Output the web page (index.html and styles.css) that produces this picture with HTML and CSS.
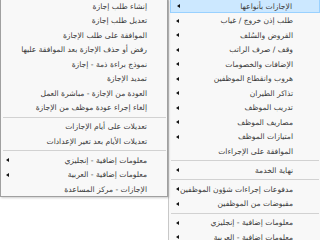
FILE: index.html
```html
<!DOCTYPE html>
<html lang="ar">
<head>
    <meta charset="UTF-8">
    <title>قائمة الإجازات</title>
    <link rel="stylesheet" href="styles.css">
</head>
<body>
    <div class="screen">
        <!-- submenu opened from the first item -->
        <ul class="menu menu-sub">
            <li class="item"><span class="label">إنشاء طلب إجازة</span></li>
            <li class="item"><span class="label">تعديل طلب إجازة</span></li>
            <li class="item"><span class="label">الموافقة على طلب الإجازة</span></li>
            <li class="item"><span class="label">رفض أو حذف الإجازة بعد الموافقة عليها</span></li>
            <li class="item"><span class="label">نموذج براءة ذمة - إجازة</span></li>
            <li class="item"><span class="label">تمديد الإجازة</span></li>
            <li class="item"><span class="label">العودة من الإجازة - مباشرة العمل</span></li>
            <li class="item"><span class="label">إلغاء إجراء عودة موظف من الإجازة</span></li>
            <li class="sep"></li>
            <li class="item"><span class="label">تعديلات على أيام الإجازات</span></li>
            <li class="item"><span class="label">تعديلات الأيام بعد تغير الإعدادات</span></li>
            <li class="sep"></li>
            <li class="item has-sub"><span class="label">معلومات إضافية - إنجليزي</span><span class="arrow"></span></li>
            <li class="item has-sub"><span class="label">معلومات إضافية - العربية</span><span class="arrow"></span></li>
            <li class="item"><span class="label">الإجازات - مركز المساعدة</span></li>
        </ul>

        <ul class="menu menu-main">
            <li class="item has-sub active"><span class="label">الإجازات بأنواعها</span><span class="arrow"></span></li>
            <li class="item has-sub"><span class="label">طلب إذن خروج / غياب</span><span class="arrow"></span></li>
            <li class="item has-sub"><span class="label">القروض والسُلف</span><span class="arrow"></span></li>
            <li class="item has-sub"><span class="label">وقف / صرف الراتب</span><span class="arrow"></span></li>
            <li class="item has-sub"><span class="label">الإضافات والخصومات</span><span class="arrow"></span></li>
            <li class="item has-sub"><span class="label">هروب وانقطاع الموظفين</span><span class="arrow"></span></li>
            <li class="item has-sub"><span class="label">تذاكر الطيران</span><span class="arrow"></span></li>
            <li class="item has-sub"><span class="label">تدريب الموظف</span><span class="arrow"></span></li>
            <li class="item has-sub"><span class="label">مصاريف الموظف</span><span class="arrow"></span></li>
            <li class="item has-sub"><span class="label">امتيازات الموظف</span><span class="arrow"></span></li>
            <li class="item"><span class="label">الموافقة على الإجراءات</span></li>
            <li class="sep"></li>
            <li class="item has-sub"><span class="label">نهاية الخدمة</span><span class="arrow"></span></li>
            <li class="sep"></li>
            <li class="item has-sub"><span class="label">مدفوعات إجراءات شؤون الموظفين</span><span class="arrow"></span></li>
            <li class="item has-sub"><span class="label">مقبوضات من الموظفين</span><span class="arrow"></span></li>
            <li class="sep"></li>
            <li class="item has-sub"><span class="label">معلومات إضافية - إنجليزي</span><span class="arrow"></span></li>
            <li class="item has-sub"><span class="label">معلومات إضافية - العربية</span><span class="arrow"></span></li>
        </ul>
    </div>
</body>
</html>
```

FILE: styles.css
```css
html, body {
    height: 240px;
    overflow: hidden;
}
body {
    margin: 0;
    background: #fff;
    font-family: "DejaVu Sans", sans-serif;
    font-size: 7.6px;
    color: #3a3a3a;
}
.screen {
    display: flex;
    align-items: flex-start;
    height: 240px;
    overflow: hidden;
}
.menu {
    list-style: none;
    margin: -1.25px 0 0;
    padding: 0;
    background: #f8f8f8;
}
.menu-sub {
    width: 166px;
    flex: none;
    border: 1px solid #a0a0a0;
    border-top: none;
    box-shadow: 1px 1px 2px rgba(0, 0, 0, 0.2);
    position: relative;
    z-index: 1;
}
.menu-main {
    flex: 1;
    height: 250px;
    border-left: 1px solid #c8c8c8;
}
.item {
    display: flex;
    align-items: center;
    direction: rtl;
    height: 14.5px;
    box-sizing: border-box;
    white-space: nowrap;
}
.menu-sub .item {
    padding: 0 20px 0 5px;
}
.menu-main .item {
    padding: 0 27px 0 7px;
}
.item.active {
    background: #cce8ff;
    border: 1px solid #99d1ff;
    margin: 0 0 0 1px;
    padding-left: 6px;
}
.arrow {
    margin-right: auto;
    width: 0;
    height: 0;
    border-top: 2.5px solid transparent;
    border-bottom: 2.5px solid transparent;
    border-right: 3px solid #111;
}
.sep {
    height: 4.5px;
    display: flex;
    align-items: center;
    padding: 0 1px 0 2px;
}
.sep::before {
    content: "";
    flex: 1;
    height: 1px;
    background: #d2d2d2;
}
```
